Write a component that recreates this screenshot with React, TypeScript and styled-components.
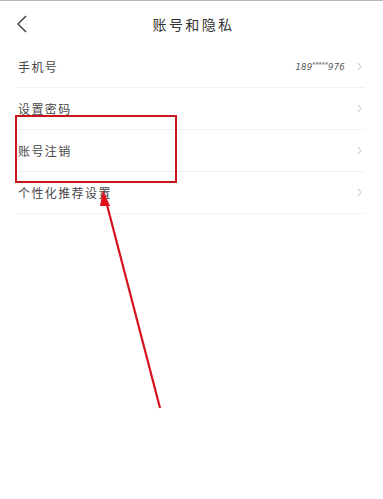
import React from "react";
import styled, { createGlobalStyle } from "styled-components";

const GlobalStyle = createGlobalStyle`
  html, body {
    margin: 0;
    padding: 0;
    background: #ffffff;
  }
  body {
    font-family: "Noto Sans CJK SC", "Noto Sans", sans-serif;
  }
`;

const Page = styled.div`
  position: relative;
  width: 383px;
  height: 499px;
  background: #ffffff;
  border-top: 1px solid #b5b5b5;
  box-sizing: border-box;
  overflow: hidden;
`;

const Header = styled.div`
  display: flex;
  align-items: center;
  justify-content: center;
  position: relative;
  height: 45px;
`;

const BackButton = styled.div`
  position: absolute;
  left: 16px;
  top: 13px;
  width: 12px;
  height: 20px;
  display: flex;
  align-items: center;
`;

const Title = styled.div`
  font-size: 14px;
  letter-spacing: 2.4px;
  color: #333333;
  margin-left: 4px;
`;

const List = styled.div`
  display: flex;
  flex-direction: column;
  padding: 0 18px;
`;

const Row = styled.div`
  display: flex;
  align-items: center;
  height: 41px;
  border-bottom: 1px solid #f1f1f1;
`;

const Label = styled.div`
  flex: 1;
  font-size: 12px;
  letter-spacing: 1.4px;
  color: #484848;
`;

const Value = styled.div`
  font-family: "DejaVu Sans Condensed", "Liberation Sans", sans-serif;
  font-style: italic;
  font-size: 9.5px;
  color: #555;
  margin-right: 12px;
  letter-spacing: 0.2px;
`;

const Star = styled.span`
  font-size: 7px;
  vertical-align: 3px;
  letter-spacing: 0;
`;

const Chevron = styled.svg`
  width: 5px;
  height: 9px;
  margin-right: 3px;
`;

const HighlightBox = styled.div`
  position: absolute;
  left: 15px;
  top: 114px;
  width: 162px;
  height: 68px;
  border: 2.5px solid #c8161e;
  box-sizing: border-box;
  pointer-events: none;
`;

const ArrowLayer = styled.svg`
  position: absolute;
  left: 0;
  top: 0;
  width: 383px;
  height: 499px;
  pointer-events: none;
`;

const RightChevron = () => (
  <Chevron viewBox="0 0 5 9">
    <path d="M1 1 L4 4.5 L1 8" fill="none" stroke="#bdbdbd" strokeWidth="1" />
  </Chevron>
);

const rows = [
  { label: "手机号", value: true },
  { label: "设置密码" },
  { label: "账号注销" },
  { label: "个性化推荐设置" },
];

export default function App() {
  return (
    <Page>
      <GlobalStyle />
      <Header>
        <BackButton>
          <svg width="12" height="20" viewBox="0 0 12 20">
            <path d="M10 2 L2 10 L10 18" fill="none" stroke="#333" strokeWidth="1.3" />
          </svg>
        </BackButton>
        <Title>账号和隐私</Title>
      </Header>
      <List>
        {rows.map((r) => (
          <Row key={r.label}>
            <Label>{r.label}</Label>
            {r.value && (
              <Value>
                189<Star>*****</Star>976
              </Value>
            )}
            <RightChevron />
          </Row>
        ))}
      </List>
      <HighlightBox />
      <ArrowLayer viewBox="0 0 383 499">
        <line x1="160" y1="407" x2="106" y2="200" stroke="#d6111b" strokeWidth="2.2" />
        <polygon points="103,189 110,205 100,205" fill="#e0101a" />
      </ArrowLayer>
    </Page>
  );
}
